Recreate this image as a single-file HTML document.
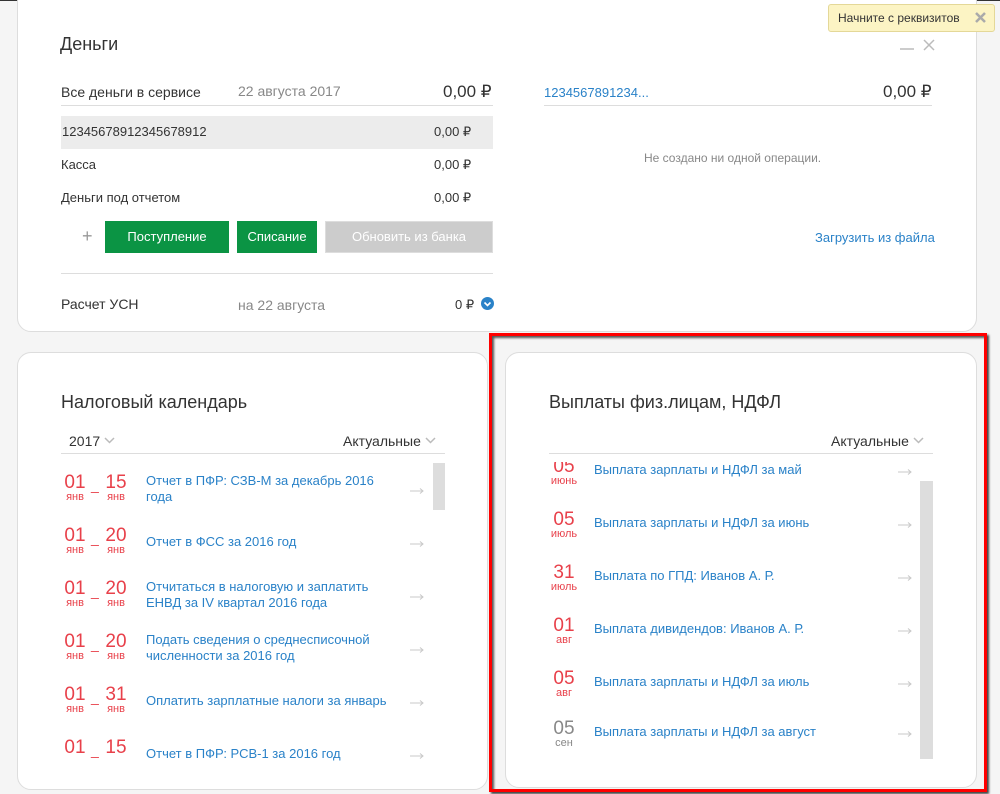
<!DOCTYPE html>
<html><head><meta charset="utf-8"><style>
*{margin:0;padding:0;box-sizing:border-box}
body{width:1000px;height:794px;background:#f5f5f5;font-family:"Liberation Sans","Noto Sans CJK SC",sans-serif;position:relative;overflow:hidden;color:#333}
.a{position:absolute;white-space:nowrap}
.card{position:absolute;background:#fff;border:1px solid #ddd;border-radius:14px}
.blue{color:#2a82c8}
.red{color:#e8404a}
.arr{position:absolute;width:14px;height:6px;line-height:0}
.arr svg{display:block}
.btn{position:absolute;color:#fff;font-size:13px;text-align:center;line-height:32px;height:32px}
.num{position:absolute;font-size:19px;width:24px;text-align:center}
.mon{position:absolute;font-size:11px;width:30px;text-align:center}
.t{position:absolute;font-size:13px;color:#2a82c8;line-height:16px}
.chev{display:inline-block;width:11px;height:7px;margin-left:4px;vertical-align:2px}
</style></head><body>
<div class="a" style="left:0;top:0;width:1000px;height:1px;background:#333"></div>
<div class="card" style="left:17px;top:-12px;width:960px;height:344px"></div>
<div class="a" style="left:60px;top:34px;font-size:18px;color:#333">Деньги</div>
<div class="a" style="left:61px;top:84px;font-size:14px">Все деньги в сервисе</div>
<div class="a" style="left:238px;top:83px;font-size:14px;color:#888">22 августа 2017</div>
<div class="a" style="left:443px;top:82px;font-size:17px">0,00 ₽</div>
<div class="a" style="left:61px;top:105px;width:432px;height:1px;background:#ddd"></div>
<div class="a" style="left:61px;top:116px;width:432px;height:33px;background:#ececec"></div>
<div class="a" style="left:62px;top:124px;font-size:13px">12345678912345678912</div>
<div class="a" style="left:434px;top:124px;font-size:13px">0,00 ₽</div>
<div class="a" style="left:61px;top:157px;font-size:13px">Касса</div>
<div class="a" style="left:434px;top:157px;font-size:13px">0,00 ₽</div>
<div class="a" style="left:61px;top:190px;font-size:13px">Деньги под отчетом</div>
<div class="a" style="left:434px;top:190px;font-size:13px">0,00 ₽</div>
<div class="a" style="left:82px;top:226px;font-size:18px;color:#999">+</div>
<div class="btn" style="left:105px;top:221px;width:124px;background:#0b9444">Поступление</div>
<div class="btn" style="left:237px;top:221px;width:80px;background:#0b9444">Списание</div>
<div class="btn" style="left:325px;top:221px;width:168px;background:#ccc;border:1px solid #ddd;line-height:30px">Обновить из банка</div>
<div class="a" style="left:61px;top:273px;width:432px;height:1px;background:#ddd"></div>
<div class="a" style="left:61px;top:296px;font-size:14px">Расчет УСН</div>
<div class="a" style="left:238px;top:297px;font-size:14px;color:#888">на 22 августа</div>
<div class="a" style="left:455px;top:297px;font-size:13px">0 ₽</div>
<svg class="a" style="left:481px;top:297px" width="13" height="13"><circle cx="6.5" cy="6.5" r="6.5" fill="#2a82c8"/><polyline points="3.5,5.5 6.5,8.5 9.5,5.5" fill="none" stroke="#fff" stroke-width="1.6"/></svg>
<div class="a blue" style="left:544px;top:85px;font-size:13px">1234567891234...</div>
<div class="a" style="left:883px;top:82px;font-size:17px">0,00 ₽</div>
<div class="a" style="left:544px;top:105px;width:388px;height:1px;background:#ddd"></div>
<div class="a" style="left:644px;top:151px;font-size:12px;color:#888">Не создано ни одной операции.</div>
<div class="a blue" style="left:815px;top:230px;font-size:13px">Загрузить из файла</div>
<div class="a" style="left:900px;top:48px;width:14px;height:2px;background:#ccc"></div>
<svg class="a" style="left:923px;top:39px" width="12" height="12"><path d="M1 1L11 11M11 1L1 11" stroke="#bbb" stroke-width="1.5"/></svg>
<div class="a" style="left:828px;top:4px;width:167px;height:28px;background:#fcf4c4;border:1px solid #e4d898;border-radius:3px"></div>
<div class="a" style="left:838px;top:11px;font-size:12px;color:#333">Начните с реквизитов</div>
<svg class="a" style="left:975px;top:12px" width="11" height="11"><path d="M1 1L10 10M10 1L1 10" stroke="#aaa" stroke-width="2.5"/></svg>

<div class="card" style="left:17px;top:352px;width:471px;height:438px"></div>
<div class="a" style="left:61px;top:392px;font-size:18px">Налоговый календарь</div>
<div class="a" style="left:69px;top:433px;font-size:14px">2017<svg class="chev"><polyline points="1,1 5.5,5.5 10,1" fill="none" stroke="#bbb" stroke-width="1.5"/></svg></div>
<div class="a" style="left:343px;top:433px;font-size:14px">Актуальные<svg class="chev"><polyline points="1,1 5.5,5.5 10,1" fill="none" stroke="#bbb" stroke-width="1.5"/></svg></div>
<div class="a" style="left:61px;top:453px;width:384px;height:1px;background:#ddd"></div>
<div class="a" style="left:433px;top:463px;width:12px;height:47px;background:#ddd"></div>

<div class="card" style="left:505px;top:352px;width:472px;height:436px"></div>
<div class="a" style="left:549px;top:392px;font-size:18px">Выплаты физ.лицам, НДФЛ</div>
<div class="a" style="left:831px;top:433px;font-size:14px">Актуальные<svg class="chev"><polyline points="1,1 5.5,5.5 10,1" fill="none" stroke="#bbb" stroke-width="1.5"/></svg></div>
<div class="a" style="left:549px;top:453px;width:384px;height:1px;background:#ddd"></div>
<div class="a" style="left:920px;top:481px;width:13px;height:278px;background:#ddd"></div>

<div id="L"></div><div id="R"></div>
<div class="a" style="left:489px;top:333px;width:498px;height:459px;border:3px solid #f00;box-shadow:2px 2px 2px #444,inset 2px 2px 2px #555"></div>
<script>
var A='<svg width="14" height="6"><path d="M0 3H13M10 0.5L13 3L10 5.5" fill="none" stroke="#c8c8c8" stroke-width="1"/></svg>';
var L=[[473,"01","15","Отчет в ПФР: СЗВ-М за декабрь 2016<br>года"],[526,"01","20","Отчет в ФСС за 2016 год"],[579,"01","20","Отчитаться в налоговую и заплатить<br>ЕНВД за IV квартал 2016 года"],[632,"01","20","Подать сведения о среднесписочной<br>численности за 2016 год"],[685,"01","31","Оплатить зарплатные налоги за январь"],[738,"01","15","Отчет в ПФР: РСВ-1 за 2016 год"]];
var h="";
L.forEach(function(r){var y=r[0];var two=r[3].indexOf("<br>")>0;
h+='<div class="num red" style="left:63px;top:'+(y-1)+'px">'+r[1]+'</div><div class="a red" style="left:91px;top:'+(y+4)+'px;font-size:14px">_</div><div class="num red" style="left:104px;top:'+(y-1)+'px">'+r[2]+'</div>';
if(y<730)h+='<div class="mon red" style="left:60px;top:'+(y+18)+'px">янв</div><div class="mon red" style="left:101px;top:'+(y+18)+'px">янв</div>';
h+='<div class="t" style="left:146px;top:'+(two?y:y+8)+'px">'+r[3]+'</div><div class="arr" style="left:410px;top:'+(y+15)+'px">'+A+'</div>';});
document.getElementById("L").innerHTML=h;
var R=[[458,"05","июнь","Выплата зарплаты и НДФЛ за май",1],[511,"05","июль","Выплата зарплаты и НДФЛ за июнь",1],[564,"31","июль","Выплата по ГПД: Иванов А. Р.",1],[617,"01","авг","Выплата дивидендов: Иванов А. Р.",1],[670,"05","авг","Выплата зарплаты и НДФЛ за июль",1],[720,"05","сен","Выплата зарплаты и НДФЛ за август",0]];
h="";
R.forEach(function(r){var y=r[0];var c=r[4]?"#e8404a":"#888";
h+='<div class="num" style="left:552px;top:'+(y-2)+'px;color:'+c+(y<460?';clip-path:inset(6px 0 0 0)':'')+'">'+r[1]+'</div><div class="mon" style="left:549px;top:'+(y+17)+'px;color:'+c+'">'+r[2]+'</div><div class="t" style="left:594px;top:'+(y+4)+'px">'+r[3]+'</div><div class="arr" style="left:898px;top:'+(y+11)+'px">'+A+'</div>';});
document.getElementById("R").innerHTML=h;
</script>
</body></html>
